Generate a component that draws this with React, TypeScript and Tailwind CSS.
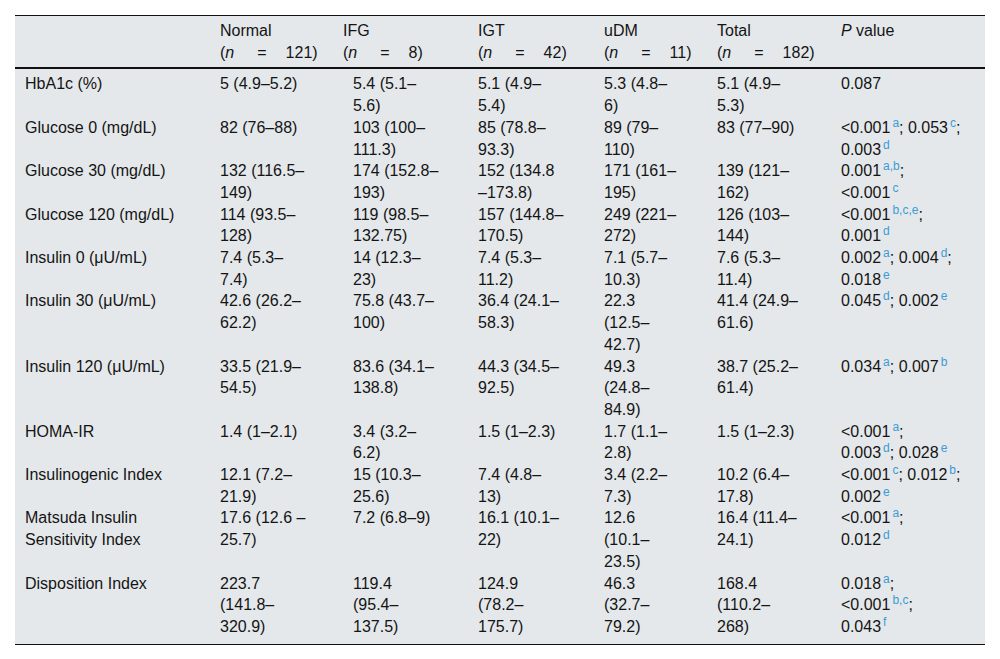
import React from "react";

type Row = { label: string[]; cells: string[][] };

// "^x" marks a superscript footnote link, e.g. "<0.001^a; 0.053^c;"
const rows: Row[] = [
  {
    label: ["HbA1c (%)"],
    cells: [["5 (4.9–5.2)"], ["5.4 (5.1–", "5.6)"], ["5.1 (4.9–", "5.4)"], ["5.3 (4.8–", "6)"], ["5.1 (4.9–", "5.3)"], ["0.087"]],
  },
  {
    label: ["Glucose 0 (mg/dL)"],
    cells: [["82 (76–88)"], ["103 (100–", "111.3)"], ["85 (78.8–", "93.3)"], ["89 (79–", "110)"], ["83 (77–90)"], ["<0.001^a; 0.053^c;", "0.003^d"]],
  },
  {
    label: ["Glucose 30 (mg/dL)"],
    cells: [["132 (116.5–", "149)"], ["174 (152.8–", "193)"], ["152 (134.8", "–173.8)"], ["171 (161–", "195)"], ["139 (121–", "162)"], ["0.001^a,b;", "<0.001^c"]],
  },
  {
    label: ["Glucose 120 (mg/dL)"],
    cells: [["114 (93.5–", "128)"], ["119 (98.5–", "132.75)"], ["157 (144.8–", "170.5)"], ["249 (221–", "272)"], ["126 (103–", "144)"], ["<0.001^b,c,e;", "0.001^d"]],
  },
  {
    label: ["Insulin 0 (μU/mL)"],
    cells: [["7.4 (5.3–", "7.4)"], ["14 (12.3–", "23)"], ["7.4 (5.3–", "11.2)"], ["7.1 (5.7–", "10.3)"], ["7.6 (5.3–", "11.4)"], ["0.002^a; 0.004^d;", "0.018^e"]],
  },
  {
    label: ["Insulin 30 (μU/mL)"],
    cells: [["42.6 (26.2–", "62.2)"], ["75.8 (43.7–", "100)"], ["36.4 (24.1–", "58.3)"], ["22.3", "(12.5–", "42.7)"], ["41.4 (24.9–", "61.6)"], ["0.045^d; 0.002^e"]],
  },
  {
    label: ["Insulin 120 (μU/mL)"],
    cells: [["33.5 (21.9–", "54.5)"], ["83.6 (34.1–", "138.8)"], ["44.3 (34.5–", "92.5)"], ["49.3", "(24.8–", "84.9)"], ["38.7 (25.2–", "61.4)"], ["0.034^a; 0.007^b"]],
  },
  {
    label: ["HOMA-IR"],
    cells: [["1.4 (1–2.1)"], ["3.4 (3.2–", "6.2)"], ["1.5 (1–2.3)"], ["1.7 (1.1–", "2.8)"], ["1.5 (1–2.3)"], ["<0.001^a;", "0.003^d; 0.028^e"]],
  },
  {
    label: ["Insulinogenic Index"],
    cells: [["12.1 (7.2–", "21.9)"], ["15 (10.3–", "25.6)"], ["7.4 (4.8–", "13)"], ["3.4 (2.2–", "7.3)"], ["10.2 (6.4–", "17.8)"], ["<0.001^c; 0.012^b;", "0.002^e"]],
  },
  {
    label: ["Matsuda Insulin", "Sensitivity Index"],
    cells: [["17.6 (12.6 –", "25.7)"], ["7.2 (6.8–9)"], ["16.1 (10.1–", "22)"], ["12.6", "(10.1–", "23.5)"], ["16.4 (11.4–", "24.1)"], ["<0.001^a;", "0.012^d"]],
  },
  {
    label: ["Disposition Index"],
    cells: [["223.7", "(141.8–", "320.9)"], ["119.4", "(95.4–", "137.5)"], ["124.9", "(78.2–", "175.7)"], ["46.3", "(32.7–", "79.2)"], ["168.4", "(110.2–", "268)"], ["0.018^a;", "<0.001^b,c;", "0.043^f"]],
  },
];

const groups = [
  { name: "Normal", n: "121" },
  { name: "IFG", n: "8" },
  { name: "IGT", n: "42" },
  { name: "uDM", n: "11" },
  { name: "Total", n: "182" },
];

const Line = ({ text }: { text: string }) => {
  const parts = text.split(/\^([a-f,]+)/);
  return (
    <div className="whitespace-nowrap">
      {parts.map((p, i) =>
        i % 2 === 1 ? (
          <sup key={i} className="ml-[2px] text-[12px] leading-none text-[#3a9bd5] relative -top-[6px]">
            {p}
          </sup>
        ) : (
          <span key={i}>{p}</span>
        )
      )}
    </div>
  );
};

const cols = "grid grid-cols-[195px_133px_125px_126px_113px_124px_154px]";

export default function App() {
  return (
    <div className="min-h-screen bg-white pt-[15px] pl-[15px] font-['Liberation_Sans',Arial,sans-serif] text-[16px] leading-[21.7px] text-[#141414]">
      <div className="w-[970px] bg-[#e4e8eb] border-t border-b border-[#111]">
        {/* header */}
        <div className={`${cols} py-[4px] border-b-2 border-[#111]`}>
          <div />
          {groups.map((g, i) => (
            <div key={g.name} className={i === 1 ? "pl-0" : "pl-[10px]"}>
              <div>{g.name}</div>
              <div className="whitespace-nowrap">
                (<i>n</i>
                <span className="ml-[23px] mr-[19px]">=</span>
                {g.n})
              </div>
            </div>
          ))}
          <div className="pl-[10px]">
            <i>P</i> value
          </div>
        </div>

        {/* body */}
        <div className="pt-[4px] pb-[6px]">
          {rows.map((r) => (
            <div key={r.label.join(" ")} className={cols}>
              <div className="pl-[10px]">
                {r.label.map((l) => (
                  <div key={l}>{l}</div>
                ))}
              </div>
              {r.cells.map((c, i) => (
                <div key={i} className="pl-[10px]">
                  {c.map((l, j) => (
                    <Line key={j} text={l} />
                  ))}
                </div>
              ))}
            </div>
          ))}
        </div>
      </div>
    </div>
  );
}
